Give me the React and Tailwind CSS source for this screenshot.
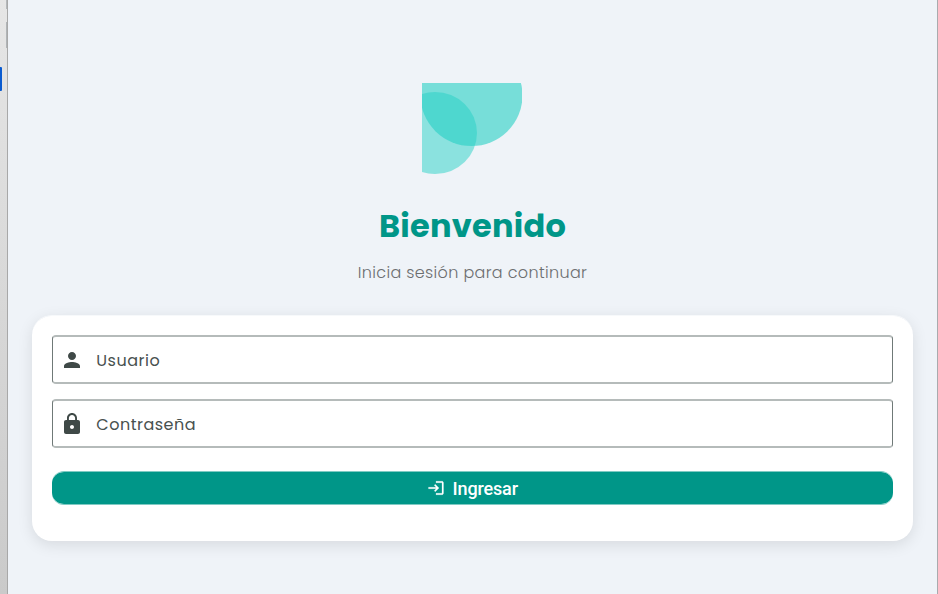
import React from "react";

const geometric = "font-['Poppins','Inter',sans-serif]";

function Logo() {
  return (
    <svg className="mr-px block h-[92px] w-[100px]" viewBox="0 0 100 92">
      <ellipse cx="13" cy="50" rx="42" ry="41" fill="#27d1c5" fillOpacity="0.5" />
      <ellipse cx="49.500" cy="12.500" rx="51" ry="50.500" fill="#27d1c5" fillOpacity="0.6" />
    </svg>
  );
}

function Field({ label, icon }) {
  return (
    <div className="flex h-[49px] items-center rounded-[4px] border-x border-y-2 border-x-[#6f7977] border-y-[#b5bbba] pl-[7px]">
      <svg className="h-6 w-6 shrink-0" viewBox="0 0 24 24" fill="#3f4947">
        <path d={icon} />
      </svg>
      <span className={`mt-[2px] ml-[12.3px] text-[16px] leading-6 tracking-[0.5px] text-[#48514f] ${geometric}`}>{label}</span>
    </div>
  );
}

const person =
  "M12 12c2.21 0 4-1.79 4-4s-1.79-4-4-4-4 1.79-4 4 1.79 4 4 4zm0 2c-2.67 0-8 1.34-8 4v2h16v-2c0-2.66-5.33-4-8-4z";
const lock =
  "M18 8h-1V6c0-2.76-2.24-5-5-5S7 3.24 7 6v2H6c-1.1 0-2 .9-2 2v10c0 1.1.9 2 2 2h12c1.1 0 2-.9 2-2V10c0-1.1-.9-2-2-2zm-6 9c-1.1 0-2-.9-2-2s.9-2 2-2 2 .9 2 2-.9 2-2 2zm3.1-9H8.9V6c0-1.71 1.39-3.1 3.1-3.1 1.71 0 3.1 1.39 3.1 3.1v2z";

export default function App() {
  return (
    <div className="flex h-[594px] w-[938px] overflow-hidden bg-[#eff3f8]">
      <aside className="flex w-2 shrink-0 flex-col border-r border-[#a8a8a8] bg-linear-to-b from-[#e6e6e6] to-[#cacaca]">
        <div className="ml-[6px] h-[9px] w-px bg-[#b4b8bb]" />
        <div className="mt-[13px] ml-[6px] h-[26px] w-px bg-[#b0b4b7]" />
        <div className="mt-[19px] h-6 w-[2px] rounded-r-[1px] bg-[#0b5bd0]" />
      </aside>
      <main className="flex flex-1 flex-col items-center border-r border-[#a9abae] pr-[24px] pl-[24px] pt-[83px]">
        <Logo />
        <h1 className={`mt-[27px] h-[48px] whitespace-nowrap text-[32px] leading-[48px] font-bold tracking-[0.25px] text-[#009688] ${geometric}`}>Bienvenido</h1>
        <p className={`mt-[11px] h-6 whitespace-nowrap text-[16px] leading-6 font-light tracking-[0.34px] text-[#6c6e70] ${geometric}`}>Inicia sesión para continuar</p>
        <section className="mt-[30px] h-[226px] w-[881px] rounded-[20px] border-t border-[#f7f9fb] bg-white bg-clip-padding px-5 pt-[19px] shadow-[0_4px_15px_rgba(0,0,0,0.10)]">
          <Field label="Usuario" icon={person} />
          <div className="h-[15px]" />
          <Field label="Contraseña" icon={lock} />
          <button className="mt-[23px] flex h-[34px] w-full items-center justify-center rounded-[12px] border-y border-[#7fcac3] bg-[#009688] bg-clip-padding font-['Roboto',sans-serif] text-[18px] font-medium tracking-[-0.15px] text-white">
            <svg className="mr-[7.500px] h-[18px] w-[18px]" viewBox="0 0 24 24" fill="white" stroke="white" strokeWidth="0.3">
              <path d="M11 7 9.6 8.4l2.6 2.6H2v2h10.2l-2.6 2.6L11 17l5-5-5-5zm9 12h-8v2h8c1.100 0 2-.9 2-2V5c0-1.100-.9-2-2-2h-8v2h8v14z" />
            </svg>
            Ingresar
          </button>
        </section>
      </main>
    </div>
  );
}
